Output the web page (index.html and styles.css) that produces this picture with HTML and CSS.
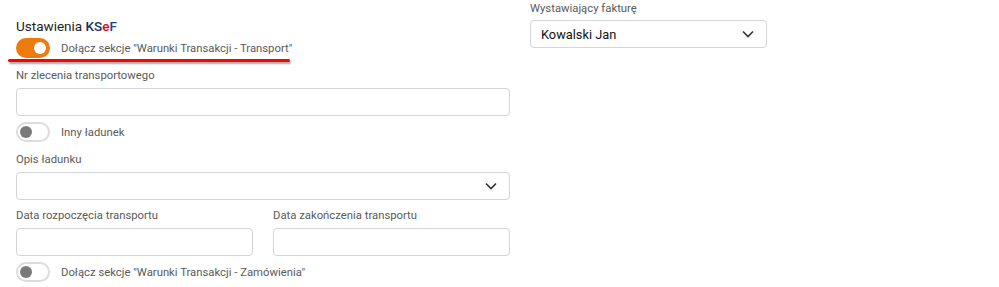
FILE: index.html
```html
<!DOCTYPE html>
<html lang="pl">

<head>
    <meta charset="UTF-8" />
    <meta name="viewport" content="width=device-width, initial-scale=1.0" />
    <title>Ustawienia KSeF</title>
    <link rel="stylesheet" href="styles.css">
</head>

<body>
    <div class="page">
        <!-- lewa kolumna -->
        <div class="col-left">
            <div class="title">Ustawienia <span class="k">K</span><span class="k">S</span><span class="e">e</span><span class="f">F</span></div>

            <div class="switch-row first">
                <span class="switch on"></span>
                <span class="switch-label">Dołącz sekcje "Warunki Transakcji - Transport"</span>
                <span class="mark"></span>
            </div>

            <div class="field">
                <label class="lbl">Nr zlecenia transportowego</label>
                <div class="box"></div>
            </div>

            <div class="switch-row">
                <span class="switch"></span>
                <span class="switch-label">Inny ładunek</span>
            </div>

            <div class="field gap-top">
                <label class="lbl">Opis ładunku</label>
                <div class="box select">
                    <svg class="chev" width="12" height="8" viewBox="0 0 12 8"><path d="M1 1.5 L6 6.5 L11 1.5" fill="none" stroke="#333" stroke-width="1.6" /></svg>
                </div>
            </div>

            <div class="pair">
                <div class="field">
                    <label class="lbl">Data rozpoczęcia transportu</label>
                    <div class="box"></div>
                </div>
                <div class="field">
                    <label class="lbl">Data zakończenia transportu</label>
                    <div class="box"></div>
                </div>
            </div>

            <div class="switch-row">
                <span class="switch"></span>
                <span class="switch-label">Dołącz sekcje "Warunki Transakcji - Zamówienia"</span>
            </div>
        </div>

        <!-- prawa kolumna -->
        <div class="col-right">
            <label class="lbl">Wystawiający fakturę</label>
            <div class="box select">
                <span class="value">Kowalski Jan</span>
                <svg class="chev" width="12" height="8" viewBox="0 0 12 8"><path d="M1 1.5 L6 6.5 L11 1.5" fill="none" stroke="#333" stroke-width="1.6" /></svg>
            </div>
        </div>
    </div>
</body>

</html>
```

FILE: styles.css
```css
body {
    margin: 0;
    padding: 0;
    background: #fff;
    font-family: Roboto, "Liberation Sans", sans-serif;
    color: #222;
}

.page {
    display: flex;
    gap: 20px;
    padding-left: 16px;
}

.col-left {
    width: 494px;
    padding-top: 18px;
}

.col-right {
    width: 237px;
    padding-top: 2px;
}

.title {
    font-size: 13.5px;
    line-height: 17px;
    color: #222;
}

.title .k {
    color: #14305a;
    font-weight: 500;
}

.title .e {
    color: #e30613;
    font-weight: 500;
}

.title .f {
    color: #1d4289;
    font-weight: 500;
}

.lbl {
    display: block;
    font-size: 11.3px;
    line-height: 14px;
    color: #5a5a5a;
    margin-bottom: 5px;
}

.col-right .lbl {
    margin-bottom: 4px;
}

.box {
    box-sizing: border-box;
    height: 28px;
    border: 1px solid #d3d3d8;
    border-radius: 4px;
    background: #fff;
}

.select {
    display: flex;
    align-items: center;
    justify-content: space-between;
    padding: 0 12px 0 10px;
}

.select .chev {
    margin-left: auto;
}

.value {
    font-size: 12.8px;
    color: #111;
}

.field {
    margin-top: 11px;
}

.gap-top {
    margin-top: 11px;
}

.pair {
    display: flex;
    gap: 20px;
}

.pair .field {
    flex: 1;
    margin-top: 9px;
}

.switch-row {
    position: relative;
    display: flex;
    align-items: center;
    gap: 11px;
    height: 20px;
    margin-top: 6px;
}

.switch-row.first {
    margin-top: 3px;
}

.switch {
    position: relative;
    box-sizing: border-box;
    width: 34px;
    height: 20px;
    border-radius: 10px;
    border: 2px solid #dcdcdc;
    background: #fff;
}

.switch::after {
    content: "";
    position: absolute;
    top: 2px;
    left: 2px;
    width: 12px;
    height: 12px;
    border-radius: 50%;
    background: #7a7a7a;
}

.switch.on {
    border-color: #ef7b10;
    background: #ef7b10;
}

.switch.on::after {
    left: auto;
    right: 2px;
    background: #fff;
}

.switch-label {
    font-size: 11.3px;
    color: #5a5a5a;
}

/* czerwone podkreślenie */
.mark {
    position: absolute;
    left: -8px;
    top: 21px;
    width: 282px;
    height: 3px;
    background: #f00;
    border-radius: 2px;
    box-shadow: 1px 2px 2px rgba(0, 0, 0, 0.35);
}
```
